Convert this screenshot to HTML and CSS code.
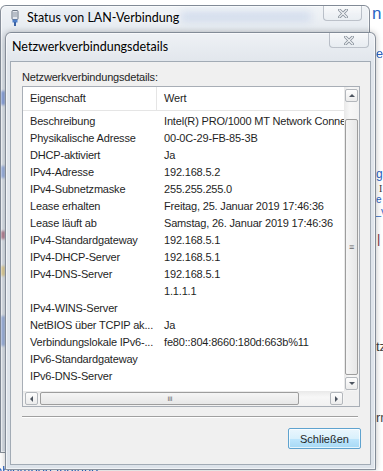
FILE: index.html
```html
<!DOCTYPE html>
<html lang="de">
<head>
    <meta charset="UTF-8">
    <title>Netzwerkverbindungsdetails</title>
    <link rel="stylesheet" href="styles.css">
</head>
<body>
    <div class="desktop">
        <!-- page behind the dialogs -->
        <div class="behind">
            <span class="frag frag-n">n</span>
            <span class="frag frag-es">es</span>
            <span class="frag frag-g">g</span>
            <span class="frag frag-i">I</span>
            <span class="frag frag-e">e</span>
            <span class="frag frag-v">_v</span>
            <span class="frag frag-bar">|</span>
            <span class="frag frag-tz">tz</span>
            <span class="frag frag-rn">rn</span>
            <span class="frag frag-link">Problembehandlung</span>
        </div>

        <div class="win outer">
            <div class="glass-blob blob1"></div>
            <div class="glass-blob blob2"></div>
            <div class="edge-spot spot1"></div>
            <div class="edge-spot spot2"></div>
            <div class="edge-spot spot3"></div>
            <div class="edge-spot spot4"></div>
            <div class="edge-spot spot5"></div>
            <div class="titlebar">
                <svg class="plug" width="8" height="16" viewBox="0 0 8 16">
                    <rect x="1" y="0.5" width="6" height="9" rx="1" fill="#e4e8ee" stroke="#6b7684"/>
                    <line x1="3" y1="2" x2="3" y2="7" stroke="#8b95a2"/>
                    <line x1="5" y1="2" x2="5" y2="7" stroke="#8b95a2"/>
                    <rect x="1.5" y="9.5" width="5" height="3" fill="#4f7fc8"/>
                    <line x1="4" y1="12" x2="4" y2="16" stroke="#3b63a6" stroke-width="2"/>
                </svg>
                <span class="title">Status von LAN-Verbindung</span>
                <div class="close">
                    <svg width="10" height="9" viewBox="0 0 10 9">
                        <path d="M1.5 1 L8.5 8 M8.5 1 L1.5 8" stroke="#8c959f" stroke-width="3" stroke-linecap="square"/>
                        <path d="M1.5 1 L8.5 8 M8.5 1 L1.5 8" stroke="#f4f6f8" stroke-width="1.2" stroke-linecap="square"/>
                    </svg>
                </div>
            </div>
        </div>

        <div class="win inner">
            <div class="titlebar">
                <span class="title">Netzwerkverbindungsdetails</span>
                <div class="close">
                    <svg width="10" height="9" viewBox="0 0 10 9">
                        <path d="M1.5 1 L8.5 8 M8.5 1 L1.5 8" stroke="#8c959f" stroke-width="3" stroke-linecap="square"/>
                        <path d="M1.5 1 L8.5 8 M8.5 1 L1.5 8" stroke="#f4f6f8" stroke-width="1.2" stroke-linecap="square"/>
                    </svg>
                </div>
            </div>
            <div class="client">
                <div class="label">Netzwerkverbindungsdetails:</div>
                <div class="listview">
                    <div class="lv-content">
                        <div class="lv-header">
                            <div class="col1">Eigenschaft</div>
                            <div class="col2">Wert</div>
                        </div>
                        <div class="lv-rows" id="rows"></div>
                    </div>
                    <div class="vscroll">
                        <div class="sbtn"><span class="arr-up"></span></div>
                        <div class="vthumb"><span class="grip-v">≡</span></div>
                        <div class="sbtn"><span class="arr-down"></span></div>
                    </div>
                    <div class="hscroll">
                        <div class="sbtn"><span class="arr-left"></span></div>
                        <div class="hthumb"><span class="grip-h">≡</span></div>
                        <div class="sbtn"><span class="arr-right"></span></div>
                    </div>
                    <div class="corner"></div>
                </div>
                <div class="separator"></div>
                <div class="buttons">
                    <button class="btn" type="button">Schließen</button>
                </div>
            </div>
        </div>
    </div>

    <script>
        const details = [
            ["Beschreibung", "Intel(R) PRO/1000 MT Network Connection"],
            ["Physikalische Adresse", "00-0C-29-FB-85-3B"],
            ["DHCP-aktiviert", "Ja"],
            ["IPv4-Adresse", "192.168.5.2"],
            ["IPv4-Subnetzmaske", "255.255.255.0"],
            ["Lease erhalten", "Freitag, 25. Januar 2019 17:46:36"],
            ["Lease läuft ab", "Samstag, 26. Januar 2019 17:46:36"],
            ["IPv4-Standardgateway", "192.168.5.1"],
            ["IPv4-DHCP-Server", "192.168.5.1"],
            ["IPv4-DNS-Server", "192.168.5.1"],
            ["", "1.1.1.1"],
            ["IPv4-WINS-Server", ""],
            ["NetBIOS über TCPIP ak...", "Ja"],
            ["Verbindungslokale IPv6-...", "fe80::804:8660:180d:663b%11"],
            ["IPv6-Standardgateway", ""],
            ["IPv6-DNS-Server", ""]
        ];

        const rows = document.getElementById("rows");
        details.forEach(item => {
            const row = document.createElement("div");
            row.className = "lv-row";
            row.innerHTML = `<div class="col1">${item[0]}</div><div class="col2">${item[1]}</div>`;
            rows.appendChild(row);
        });
    </script>
</body>
</html>
```

FILE: styles.css
```css
body {
    margin: 0;
    background-color: #ffffff;
    font-family: "Liberation Sans", Arial, sans-serif;
    font-size: 11px;
    color: #1f1f1f;
    overflow: hidden;
}

.desktop {
    position: relative;
    width: 383px;
    height: 471px;
    overflow: hidden;
    background-color: #ffffff;
}

/* fragments of the page behind */
.frag {
    position: absolute;
    font-family: "Liberation Sans", Arial, sans-serif;
    font-size: 13px;
    line-height: 13px;
    color: #2a64c4;
    white-space: nowrap;
}

.frag-n { left: 372px; top: 5px; font-size: 17px; line-height: 17px; }
.frag-es { left: 376px; top: 47px; filter: blur(0.6px); }
.frag-g { left: 376px; top: 168px; font-size: 12px; line-height: 12px; }
.frag-i { left: 379px; top: 184px; font-size: 10px; line-height: 10px; color: #333333; font-family: "Liberation Serif", serif; }
.frag-e { left: 376px; top: 195px; font-size: 10px; line-height: 10px; }
.frag-v { left: 375px; top: 206px; font-size: 11px; line-height: 11px; }
.frag-bar { left: 377px; top: 232px; color: #7a2a3a; }
.frag-tz { left: 376px; top: 340px; color: #444444; }
.frag-rn { left: 376px; top: 411px; color: #444444; }
.frag-link { left: -18px; top: 464px; text-decoration: underline; filter: blur(0.5px); }

/* aero windows */
.win {
    position: absolute;
    box-sizing: border-box;
    border: 1px solid rgba(70, 80, 95, 0.6);
    border-radius: 6px 6px 0 0;
    overflow: hidden;
}

.outer {
    left: 0;
    top: 5px;
    width: 370px;
    height: 448px;
    background: linear-gradient(#f1f4f7, #dfe5ec 40px, #d9e0e8);
    box-shadow: inset 0 0 0 1px rgba(255, 255, 255, 0.6);
}

.inner {
    left: 5px;
    top: 32px;
    width: 371px;
    height: 438px;
    background: linear-gradient(#eef1f5, #e1e6ec 30px, #dde3ea);
    box-shadow: 0 0 6px rgba(0, 0, 0, 0.25), inset 0 0 0 1px rgba(255, 255, 255, 0.6);
}

.glass-blob {
    position: absolute;
    background-color: rgba(110, 145, 215, 0.22);
    filter: blur(4px);
}

.blob1 { left: 180px; top: 6px; width: 130px; height: 9px; }
.blob2 { left: 40px; top: 6px; width: 60px; height: 6px; background-color: rgba(110, 145, 215, 0.12); }

.edge-spot {
    position: absolute;
    left: 0;
    width: 4px;
    filter: blur(1px);
}

.spot1 { top: 85px; height: 14px; background-color: rgba(60, 100, 200, 0.55); }
.spot2 { top: 160px; height: 12px; background-color: rgba(80, 120, 210, 0.5); }
.spot3 { top: 225px; height: 8px; background-color: rgba(140, 40, 70, 0.55); }
.spot4 { top: 260px; height: 10px; background-color: rgba(220, 180, 60, 0.5); }
.spot5 { top: 310px; height: 30px; background-color: rgba(70, 110, 200, 0.45); }

.titlebar {
    display: flex;
    align-items: flex-start;
}

.outer .titlebar {
    height: 26px;
    padding-left: 10px;
}

.inner .titlebar {
    height: 28px;
    padding-left: 6px;
}

.plug {
    margin-top: 4px;
    flex-shrink: 0;
}

.title {
    font-family: Lato, "Noto Sans", sans-serif;
    font-size: 12.5px;
    color: #000000;
    white-space: nowrap;
    text-shadow: 0 0 6px rgba(255, 255, 255, 0.9);
}

.outer .title {
    margin-left: 8px;
    margin-top: 4px;
}

.inner .title {
    margin-top: 6px;
}

.close {
    margin-left: auto;
    box-sizing: border-box;
    display: flex;
    align-items: center;
    justify-content: center;
    border: 1px solid rgba(120, 130, 145, 0.45);
    border-top: none;
    border-radius: 0 0 4px 4px;
    background: linear-gradient(rgba(255, 255, 255, 0.55), rgba(230, 235, 240, 0.5));
}

.outer .close {
    width: 39px;
    height: 15px;
    margin-right: 7px;
}

.inner .close {
    width: 40px;
    height: 15px;
    margin-right: 6px;
}

/* dialog client area */
.client {
    box-sizing: border-box;
    margin: 0 4px;
    height: 404px;
    background-color: #f0f0f0;
    border: 1px solid #a2abb5;
    padding: 0 10px 0 11px;
    letter-spacing: -0.18px;
}

.label {
    margin-top: 9px;
    line-height: 13px;
    color: #1f1f1f;
}

.listview {
    margin-top: 2px;
    height: 321px;
    box-sizing: border-box;
    border: 1px solid #a8aeb6;
    background-color: #ffffff;
    display: grid;
    grid-template-columns: 321px 15px;
    grid-template-rows: 304px 15px;
}

.lv-content {
    overflow: hidden;
}

.lv-header {
    display: flex;
    height: 23px;
    border-bottom: 1px solid #e5e5e5;
    line-height: 23px;
}

.lv-header .col1 {
    width: 126px;
    padding-left: 7px;
    border-right: 1px solid #e5e5e5;
}

.lv-header .col2 {
    padding-left: 7px;
}

.lv-rows {
    padding-top: 2px;
}

.lv-row {
    display: flex;
    height: 17px;
    line-height: 17px;
    white-space: nowrap;
}

.lv-row .col1 {
    width: 127px;
    padding-left: 7px;
    overflow: hidden;
    flex-shrink: 0;
}

.lv-row .col2 {
    padding-left: 7px;
}

/* scrollbars */
.vscroll {
    display: flex;
    flex-direction: column;
    padding: 2px 1px 1px 1px;
    background: linear-gradient(to right, #e9e9e9, #f7f7f7 40%, #f1f1f1);
}

.hscroll {
    display: flex;
    padding: 1px 1px 1px 2px;
    background: linear-gradient(#e9e9e9, #f7f7f7 40%, #f1f1f1);
}

.corner {
    background-color: #f0f0f0;
}

.sbtn {
    box-sizing: border-box;
    width: 13px;
    height: 13px;
    flex-shrink: 0;
    border: 1px solid #b3b7bc;
    border-radius: 2px;
    background: linear-gradient(#fdfdfd, #ececec);
    display: flex;
    align-items: center;
    justify-content: center;
}

.vthumb {
    flex: 1;
    margin: 17px 0 2px 0;
    box-sizing: border-box;
    border: 1px solid #9d9d9d;
    border-radius: 2px;
    background: linear-gradient(to right, #f5f5f5, #e7e7e7);
    display: flex;
    align-items: center;
    justify-content: center;
}

.hthumb {
    width: 259px;
    margin: 0 auto 0 2px;
    box-sizing: border-box;
    border: 1px solid #9d9d9d;
    border-radius: 2px;
    background: linear-gradient(#f5f5f5, #e7e7e7);
    display: flex;
    align-items: center;
    justify-content: center;
}

.grip-v,
.grip-h {
    font-size: 9px;
    line-height: 9px;
    color: #666666;
}

.grip-h {
    display: inline-block;
    transform: rotate(90deg);
}

.arr-up,
.arr-down,
.arr-left,
.arr-right {
    width: 0;
    height: 0;
}

.arr-up {
    border-left: 3px solid transparent;
    border-right: 3px solid transparent;
    border-bottom: 3px solid #4d5560;
}

.arr-down {
    border-left: 3px solid transparent;
    border-right: 3px solid transparent;
    border-top: 3px solid #4d5560;
}

.arr-left {
    border-top: 3px solid transparent;
    border-bottom: 3px solid transparent;
    border-right: 3px solid #4d5560;
}

.arr-right {
    border-top: 3px solid transparent;
    border-bottom: 3px solid transparent;
    border-left: 3px solid #4d5560;
}

.separator {
    margin: 9px 2px 0 0;
    border-top: 1px solid #a0a0a0;
    border-bottom: 1px solid #ffffff;
}

.buttons {
    display: flex;
    justify-content: flex-end;
    margin-right: -1px;
}

.btn {
    margin-top: 10px;
    width: 73px;
    height: 21px;
    padding: 0;
    font-family: "Liberation Sans", Arial, sans-serif;
    font-size: 11px;
    color: #1f1f1f;
    border: 1px solid #5fa3cf;
    border-radius: 2px;
    background: linear-gradient(#eaf6fd, #d9f0fc 50%, #bee6fd 51%, #a7d9f5);
    box-shadow: inset 0 0 0 1px rgba(255, 255, 255, 0.7);
}
```
